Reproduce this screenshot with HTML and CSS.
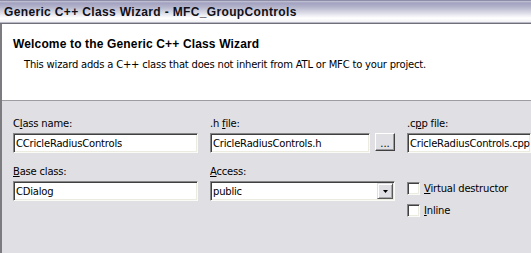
FILE: index.html
```html
<!DOCTYPE html>
<html>
<head>
<meta charset="utf-8">
<link rel="stylesheet" href="styles.css">
</head>
<body>
<div class="window">
  <div class="titlebar"><span class="title">Generic C++ Class Wizard - MFC_GroupControls</span></div>
  <div class="frame">
    <div class="header">
      <div class="h-title">Welcome to the Generic C++ Class Wizard</div>
      <div class="h-sub">This wizard adds a C++ class that does not inherit from ATL or MFC to your project.</div>
    </div>
    <div class="body">
      <div class="grid">
        <div class="cell">
          <div class="label">C<u>l</u>ass name:</div>
          <div class="field wide"><span>CCricleRadiusControls</span></div>
        </div>
        <div class="cell">
          <div class="label">.h <u>f</u>ile:</div>
          <div class="inline-row">
            <div class="field hfile"><span>CricleRadiusControls.h</span></div>
            <div class="btn">...</div>
          </div>
        </div>
        <div class="cell">
          <div class="label">.c<u>p</u>p file:</div>
          <div class="field cpp"><span>CricleRadiusControls.cpp</span></div>
        </div>
        <div class="cell">
          <div class="label"><u>B</u>ase class:</div>
          <div class="field wide"><span>CDialog</span></div>
        </div>
        <div class="cell">
          <div class="label"><u>A</u>ccess:</div>
          <div class="field select"><span>public</span><div class="arrow"><svg width="5" height="3" viewBox="0 0 5 3"><path d="M0 0h5L2.5 3z" fill="#000"/></svg></div></div>
        </div>
        <div class="cell checks">
          <div class="check"><div class="box"></div><span><u>V</u>irtual destructor</span></div>
          <div class="check"><div class="box"></div><span><u>I</u>nline</span></div>
        </div>
      </div>
    </div>
  </div>
</div>
</body>
</html>
```

FILE: styles.css
```css
html, body {
  margin: 0;
  padding: 0;
  background: #e0dfe3;
}
.window {
  width: 531px;
  height: 253px;
  overflow: hidden;
  display: flex;
  flex-direction: column;
  font-family: "DejaVu Sans", Verdana, sans-serif;
  font-size: 10px;
  letter-spacing: -0.2px;
  color: #000;
}
.titlebar {
  height: 21px;
  flex: none;
  border-top: 1px solid #8e8ea8;
  border-bottom: 1px solid #b9b9c6;
  box-shadow: 0 1px 0 #6f6f7c;
  margin-bottom: 1px;
  background: linear-gradient(to bottom, #c6c6d8 0px, #a2a2c0 2px, #b4b4cc 6px, #dcdce8 12px, #ffffff 17px, #f2f2f6 21px);
  display: flex;
  align-items: center;
  padding-left: 4px;
}
.title {
  font-family: "Liberation Sans", Arial, sans-serif;
  font-weight: bold;
  font-size: 12px;
  color: #101018;
  letter-spacing: 0.35px;
}
.frame {
  flex: 1;
  border-left: 2px solid #7c7c80;
  display: flex;
  flex-direction: column;
}
.header {
  background: #fff;
  height: 77px;
  flex: none;
  border-bottom: 1px solid #9d9da1;
  padding: 13px 0 0 11px;
  box-sizing: border-box;
}
.h-title {
  font-family: "Liberation Sans", Arial, sans-serif;
  font-weight: bold;
  font-size: 12px;
  line-height: 15px;
  letter-spacing: 0.15px;
}
.h-sub {
  margin-top: 6px;
  margin-left: 11px;
  line-height: 13px;
}
.body {
  flex: 1;
  background: #e0dfe3;
  padding: 16px 0 0 11px;
}
.grid {
  display: grid;
  grid-template-columns: 185px 185px 1fr;
  column-gap: 12px;
  row-gap: 12px;
}
.label {
  line-height: 13px;
  height: 13px;
  margin-bottom: 3px;
  white-space: nowrap;
}
.field {
  height: 20px;
  box-sizing: border-box;
  background: #fff;
  border-top: 1px solid #868686;
  border-left: 1px solid #868686;
  border-right: 1px solid #fafaf6;
  border-bottom: 1px solid #fafaf6;
  box-shadow: inset 1px 1px 0 #404040, inset -1px -1px 0 #ecebe0;
  display: flex;
  align-items: center;
  padding-left: 2px;
  white-space: nowrap;
  overflow: hidden;
}
.wide { width: 185px; }
.inline-row {
  display: flex;
  align-items: flex-start;
  gap: 5px;
}
.hfile { width: 160px; }
.cpp { width: 124px; }
.btn {
  width: 20px;
  height: 18px;
  box-sizing: border-box;
  border-top: 1px solid #fff;
  border-left: 1px solid #fff;
  border-right: 1px solid #404040;
  border-bottom: 1px solid #404040;
  box-shadow: inset -1px -1px 0 #9c9ca0;
  background: #e0dfe3;
  display: flex;
  align-items: center;
  justify-content: center;
  line-height: 10px;
  padding-top: 3px;
  letter-spacing: 0;
}
.select {
  width: 185px;
  justify-content: space-between;
  padding-right: 1px;
}
.arrow {
  width: 16px;
  height: 16px;
  box-sizing: border-box;
  background: #e0dfe3;
  border-top: 1px solid #e0dfe3;
  border-left: 1px solid #e0dfe3;
  border-right: 1px solid #5a5a5a;
  border-bottom: 1px solid #5a5a5a;
  box-shadow: inset 1px 1px 0 #fff, inset -1px -1px 0 #a8a8ac;
  display: flex;
  align-items: center;
  justify-content: center;
  padding-top: 1px;
}
.checks {
  padding-top: 12px;
}
.check {
  height: 22px;
  display: flex;
  align-items: center;
  gap: 4px;
}
.box {
  width: 13px;
  height: 13px;
  box-sizing: border-box;
  background: #fff;
  border-top: 1px solid #868686;
  border-left: 1px solid #868686;
  border-right: 1px solid #fafaf6;
  border-bottom: 1px solid #fafaf6;
  box-shadow: inset 1px 1px 0 #404040, inset -1px -1px 0 #ecebe0;
}
```
